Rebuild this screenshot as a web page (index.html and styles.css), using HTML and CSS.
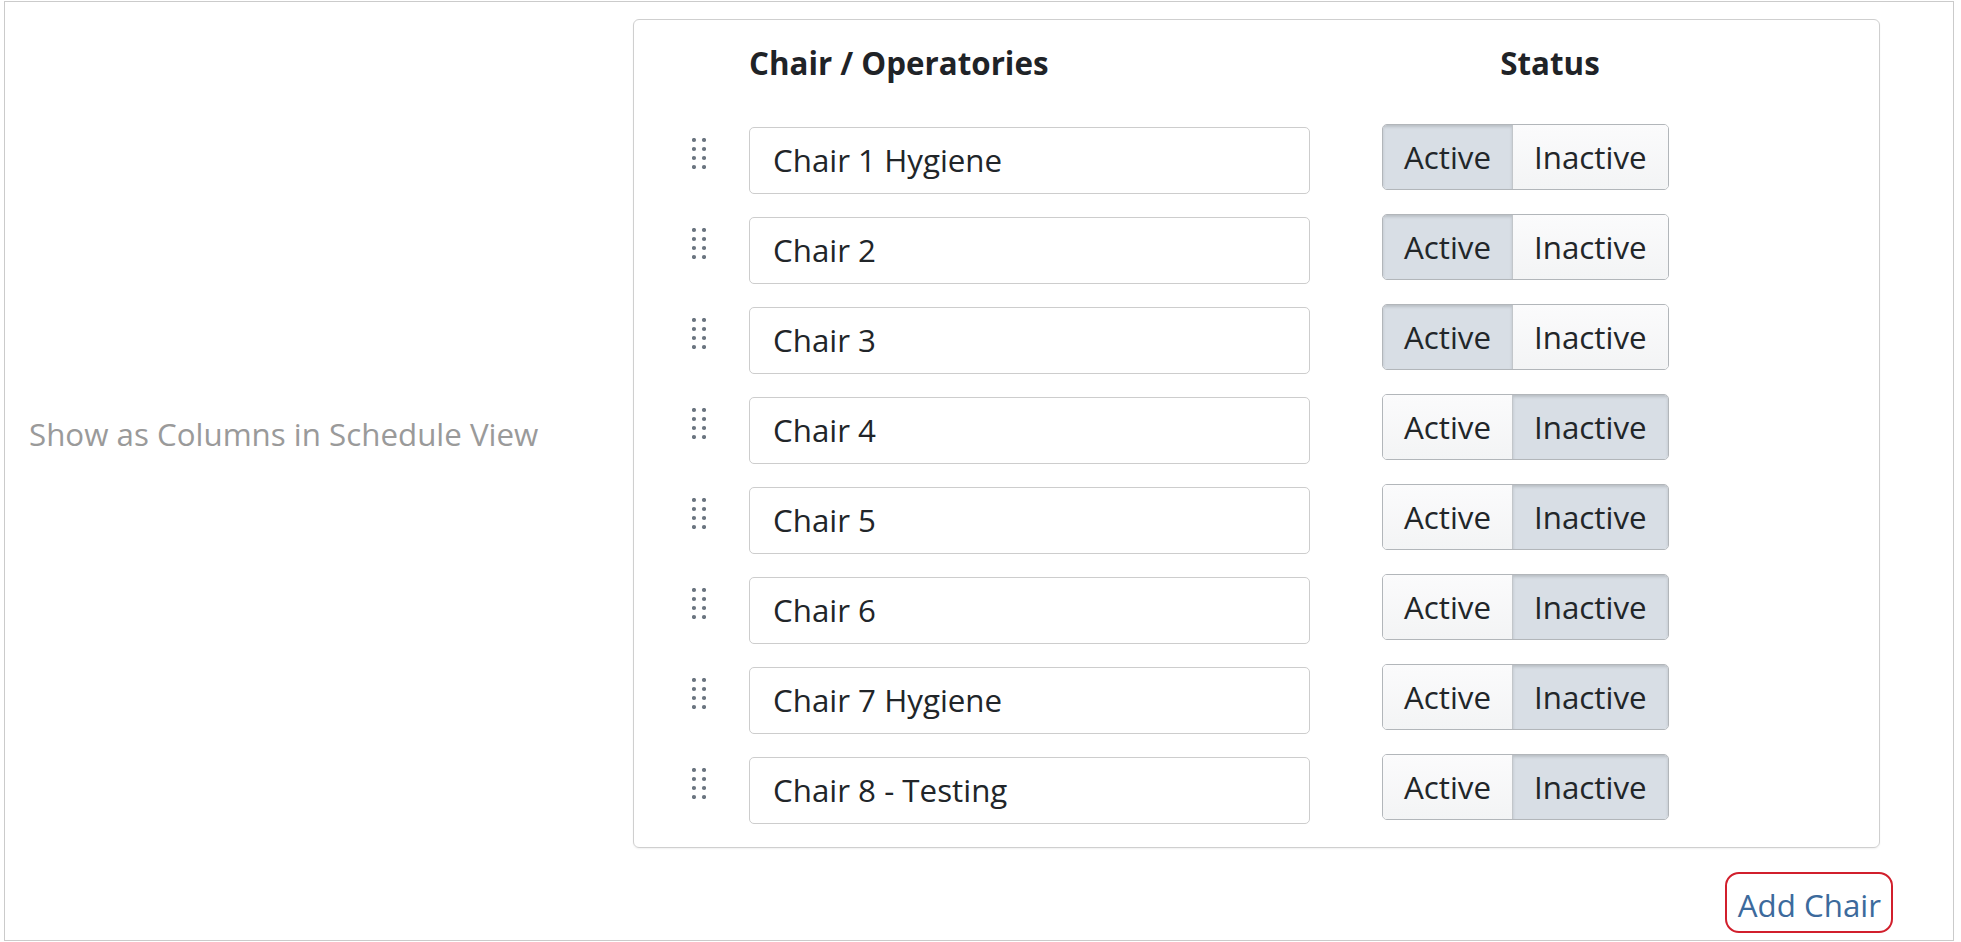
FILE: index.html
```html
<!DOCTYPE html>
<html lang="en">
<head>
<meta charset="utf-8">
<title>Chairs / Operatories</title>
<link rel="stylesheet" href="styles.css">
</head>
<body>
<div class="frame">
  <div class="setting">
    <div class="label">Show as Columns in Schedule View</div>
    <div class="panel">
      <div class="grid head">
        <div></div>
        <div class="th">Chair / Operatories</div>
        <div></div>
        <div class="th center">Status</div>
      </div>
      <div class="rows">
        <div class="grid row">
          <div class="handle"><svg width="14" height="31" viewBox="0 0 14 31"><g fill="#6b7580"><circle cx="2" cy="2" r="2.1"/><circle cx="12" cy="2" r="2.1"/><circle cx="2" cy="11" r="2.1"/><circle cx="12" cy="11" r="2.1"/><circle cx="2" cy="20" r="2.1"/><circle cx="12" cy="20" r="2.1"/><circle cx="2" cy="29" r="2.1"/><circle cx="12" cy="29" r="2.1"/></g></svg></div>
          <div class="field">Chair 1 Hygiene</div>
          <div></div>
          <div class="toggle"><span class="seg on">Active</span><span class="seg">Inactive</span></div>
        </div>
        <div class="grid row">
          <div class="handle"><svg width="14" height="31" viewBox="0 0 14 31"><g fill="#6b7580"><circle cx="2" cy="2" r="2.1"/><circle cx="12" cy="2" r="2.1"/><circle cx="2" cy="11" r="2.1"/><circle cx="12" cy="11" r="2.1"/><circle cx="2" cy="20" r="2.1"/><circle cx="12" cy="20" r="2.1"/><circle cx="2" cy="29" r="2.1"/><circle cx="12" cy="29" r="2.1"/></g></svg></div>
          <div class="field">Chair 2</div>
          <div></div>
          <div class="toggle"><span class="seg on">Active</span><span class="seg">Inactive</span></div>
        </div>
        <div class="grid row">
          <div class="handle"><svg width="14" height="31" viewBox="0 0 14 31"><g fill="#6b7580"><circle cx="2" cy="2" r="2.1"/><circle cx="12" cy="2" r="2.1"/><circle cx="2" cy="11" r="2.1"/><circle cx="12" cy="11" r="2.1"/><circle cx="2" cy="20" r="2.1"/><circle cx="12" cy="20" r="2.1"/><circle cx="2" cy="29" r="2.1"/><circle cx="12" cy="29" r="2.1"/></g></svg></div>
          <div class="field">Chair 3</div>
          <div></div>
          <div class="toggle"><span class="seg on">Active</span><span class="seg">Inactive</span></div>
        </div>
        <div class="grid row">
          <div class="handle"><svg width="14" height="31" viewBox="0 0 14 31"><g fill="#6b7580"><circle cx="2" cy="2" r="2.1"/><circle cx="12" cy="2" r="2.1"/><circle cx="2" cy="11" r="2.1"/><circle cx="12" cy="11" r="2.1"/><circle cx="2" cy="20" r="2.1"/><circle cx="12" cy="20" r="2.1"/><circle cx="2" cy="29" r="2.1"/><circle cx="12" cy="29" r="2.1"/></g></svg></div>
          <div class="field">Chair 4</div>
          <div></div>
          <div class="toggle"><span class="seg">Active</span><span class="seg on">Inactive</span></div>
        </div>
        <div class="grid row">
          <div class="handle"><svg width="14" height="31" viewBox="0 0 14 31"><g fill="#6b7580"><circle cx="2" cy="2" r="2.1"/><circle cx="12" cy="2" r="2.1"/><circle cx="2" cy="11" r="2.1"/><circle cx="12" cy="11" r="2.1"/><circle cx="2" cy="20" r="2.1"/><circle cx="12" cy="20" r="2.1"/><circle cx="2" cy="29" r="2.1"/><circle cx="12" cy="29" r="2.1"/></g></svg></div>
          <div class="field">Chair 5</div>
          <div></div>
          <div class="toggle"><span class="seg">Active</span><span class="seg on">Inactive</span></div>
        </div>
        <div class="grid row">
          <div class="handle"><svg width="14" height="31" viewBox="0 0 14 31"><g fill="#6b7580"><circle cx="2" cy="2" r="2.1"/><circle cx="12" cy="2" r="2.1"/><circle cx="2" cy="11" r="2.1"/><circle cx="12" cy="11" r="2.1"/><circle cx="2" cy="20" r="2.1"/><circle cx="12" cy="20" r="2.1"/><circle cx="2" cy="29" r="2.1"/><circle cx="12" cy="29" r="2.1"/></g></svg></div>
          <div class="field">Chair 6</div>
          <div></div>
          <div class="toggle"><span class="seg">Active</span><span class="seg on">Inactive</span></div>
        </div>
        <div class="grid row">
          <div class="handle"><svg width="14" height="31" viewBox="0 0 14 31"><g fill="#6b7580"><circle cx="2" cy="2" r="2.1"/><circle cx="12" cy="2" r="2.1"/><circle cx="2" cy="11" r="2.1"/><circle cx="12" cy="11" r="2.1"/><circle cx="2" cy="20" r="2.1"/><circle cx="12" cy="20" r="2.1"/><circle cx="2" cy="29" r="2.1"/><circle cx="12" cy="29" r="2.1"/></g></svg></div>
          <div class="field">Chair 7 Hygiene</div>
          <div></div>
          <div class="toggle"><span class="seg">Active</span><span class="seg on">Inactive</span></div>
        </div>
        <div class="grid row">
          <div class="handle"><svg width="14" height="31" viewBox="0 0 14 31"><g fill="#6b7580"><circle cx="2" cy="2" r="2.1"/><circle cx="12" cy="2" r="2.1"/><circle cx="2" cy="11" r="2.1"/><circle cx="12" cy="11" r="2.1"/><circle cx="2" cy="20" r="2.1"/><circle cx="12" cy="20" r="2.1"/><circle cx="2" cy="29" r="2.1"/><circle cx="12" cy="29" r="2.1"/></g></svg></div>
          <div class="field">Chair 8 - Testing</div>
          <div></div>
          <div class="toggle"><span class="seg">Active</span><span class="seg on">Inactive</span></div>
        </div>
      </div>
    </div>
  </div>
  <div class="actions">
    <a class="add" href="#">Add Chair</a>
  </div>
</div>
</body>
</html>
```

FILE: styles.css
```css
html, body {
  margin: 0;
  padding: 0;
  background: #ffffff;
}

body {
  font-family: "Open Sans", "Noto Sans", "Liberation Sans", sans-serif;
  font-size: 31.3px;
  line-height: 42px;
  color: #212529;
}

.frame {
  box-sizing: border-box;
  width: 1950px;
  height: 940px;
  margin: 1px 0 0 4px;
  border: 1px solid #cbcbcb;
  padding-top: 17px;
}

.setting {
  display: flex;
  align-items: center;
}

.label {
  box-sizing: border-box;
  width: 628px;
  padding-left: 24px;
  color: #9a9a9a;
}

.panel {
  box-sizing: border-box;
  width: 1247px;
  border: 1px solid #cfcfcf;
  border-radius: 6px;
  padding: 22px 0 23px 0;
  box-shadow: 0 1px 2px rgba(0, 0, 0, 0.06);
}

.grid {
  display: grid;
  grid-template-columns: 115px 561px 72px 336px;
}

.th {
  font-weight: 700;
  color: #1f2327;
}

.center {
  text-align: center;
}

.rows {
  display: flex;
  flex-direction: column;
  gap: 20px;
  margin-top: 40px;
}

.row {
  align-items: start;
  height: 70px;
}

.handle {
  padding: 14px 0 0 58px;
  line-height: 0;
}

.field {
  box-sizing: border-box;
  height: 67px;
  margin-top: 3px;
  border: 1px solid #cdcdcd;
  border-radius: 5px;
  padding: 0 23px;
  line-height: 65px;
  color: #212529;
  background: #ffffff;
}

.toggle {
  justify-self: start;
  display: flex;
  height: 66px;
  border: 1px solid #b2b6ba;
  border-radius: 5px;
  overflow: hidden;
  box-sizing: border-box;
}

.seg {
  display: block;
  padding: 0 21px;
  line-height: 64px;
  background: linear-gradient(#fbfbfc, #f3f4f5);
  color: #222629;
}

.seg + .seg {
  border-left: 1px solid #c2c6ca;
}

.seg.on {
  background: #d8dee5;
  box-shadow: inset 0 2px 3px rgba(0, 0, 0, 0.14);
}

.actions {
  display: flex;
  justify-content: flex-end;
  padding-right: 60px;
  margin-top: 24px;
}

.add {
  display: block;
  height: 61px;
  box-sizing: border-box;
  border: 2.5px solid #d11f2c;
  border-radius: 14px;
  padding: 10px 10px 0 11px;
  line-height: 42px;
  color: #3c6a9c;
  text-decoration: none;
}
```
